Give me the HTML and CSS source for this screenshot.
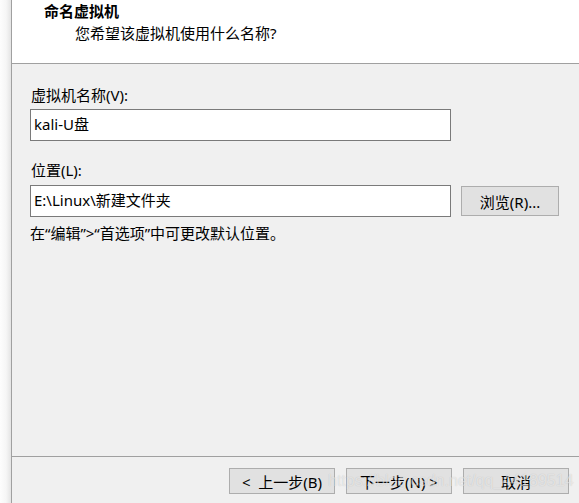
FILE: index.html
```html
<!DOCTYPE html>
<html lang="zh-CN">
<head>
<meta charset="utf-8">
<title>新建虚拟机向导</title>
<link rel="stylesheet" href="styles.css">
</head>
<body>
<div class="window">
  <div class="edge"></div>
  <div class="main">
    <header class="head">
      <div class="title">命名虚拟机</div>
      <div class="subtitle">您希望该虚拟机使用什么名称?</div>
    </header>
    <section class="content">
      <div class="label label-first">虚拟机名称(V):</div>
      <div class="row">
        <div class="field">kali-U盘</div>
      </div>
      <div class="label label-second">位置(L):</div>
      <div class="row row-loc">
        <div class="field">E:\Linux\新建文件夹</div>
        <div class="btn btn-browse">浏览(R)...</div>
      </div>
      <div class="hint">在“编辑”&gt;“首选项”中可更改默认位置。</div>
    </section>
    <footer class="foot">
      <div class="btn btn-nav">&lt;&nbsp; 上一步(B)</div>
      <div class="btn btn-nav">下一步(N) &gt;</div>
      <div class="btn btn-nav">取消</div>
      <div class="watermark">https://blog.csdn.net/qq_44189514</div>
    </footer>
  </div>
</div>
</body>
</html>
```
FILE: styles.css
```css
* { box-sizing: border-box; }
html, body {
  margin: 0;
  padding: 0;
  width: 579px;
  height: 503px;
  overflow: hidden;
}
body {
  font-family: "Noto Sans", "Noto Sans CJK SC", sans-serif;
  font-size: 15px;
  color: #000;
  background: #f0f0f0;
}
.window {
  display: flex;
  width: 579px;
  height: 503px;
}
.edge {
  width: 12px;
  flex: none;
  background: linear-gradient(to right, #fdfdfd 0%, #f6f6f6 55%, #e4e4e4 100%);
  border-right: 1px solid #a0a0a0;
}
.main {
  flex: 1;
  display: flex;
  flex-direction: column;
  background: #f0f0f0;
}
.head {
  height: 64px;
  flex: none;
  background: #fff;
  border-bottom: 1px solid #a0a0a0;
  padding: 1px 0 0 32px;
}
.title {
  font-weight: 700;
  line-height: 20px;
}
.subtitle {
  line-height: 20px;
  margin: 2px 0 0 31px;
}
.content {
  flex: 1;
  padding: 21px 0 0 18px;
}
.label {
  line-height: 20px;
  padding-left: 1px;
}
.row {
  display: flex;
  align-items: center;
  margin-top: 4px;
}
.row-loc { margin-top: 5px; }
.label-second { margin-top: 19px; }
.field {
  width: 421px;
  height: 32px;
  background: #fff;
  border: 1px solid #7a7a7a;
  padding: 0 3px;
  line-height: 28px;
  white-space: nowrap;
}
.btn {
  background: #e1e1e1;
  border: 1px solid #adadad;
  display: flex;
  align-items: center;
  justify-content: center;
  white-space: nowrap;
}
.btn-browse {
  width: 98px;
  height: 30px;
  margin-left: 10px;
}
.hint {
  margin-top: 6px;
  line-height: 20px;
}
.foot {
  position: relative;
  height: 47px;
  flex: none;
  border-top: 1px solid #a0a0a0;
  display: flex;
  justify-content: flex-end;
  align-items: flex-start;
  gap: 11px;
  padding: 11px 10px 0 0;
}
.btn-nav {
  width: 106px;
  height: 26px;
}
.watermark {
  position: absolute;
  left: 316px;
  top: 14px;
  font-family: "Liberation Sans", sans-serif;
  font-size: 16px;
  line-height: 20px;
  color: rgba(255, 255, 255, 0.55);
  text-shadow: 0 0 1px rgba(0, 0, 0, 0.18);
  pointer-events: none;
  white-space: nowrap;
}
```
